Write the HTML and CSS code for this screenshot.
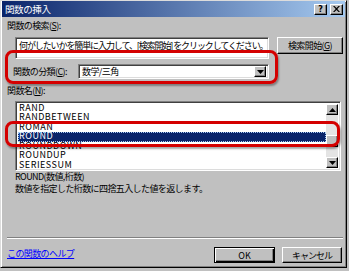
FILE: index.html
```html
<!DOCTYPE html>
<html><head><title>関数の挿入</title>
<link rel="stylesheet" href="styles.css">
</head>
<body>
<div class="window">
  <div class="titlebar">
    <span class="title">関数の挿入</span>
    <span class="caption-btns">
      <span class="cap-btn help">?</span>
      <span class="cap-btn close"><svg width="7" height="6" viewBox="0 0 7 6"><path d="M0 0h1.5l2 2 2-2H7L4.3 3 7 6H5.5l-2-2-2 2H0l2.7-3z" fill="#000"/></svg></span>
    </span>
  </div>
  <div class="content">
    <div class="label">関数の検索(<u>S</u>):</div>
    <div class="search-row">
      <div class="field search-field">何がしたいかを簡単に入力して、[検索開始] をクリックしてください。</div>
      <div class="btn search-btn">検索開始(<u>G</u>)</div>
    </div>
    <div class="category-row">
      <span class="label cat-label">関数の分類(<u>C</u>):</span>
      <div class="field combo">
        <span class="combo-text">数学/三角</span>
        <span class="btn drop"><svg width="7" height="4" viewBox="0 0 7 4"><path d="M0 0h7L3.5 4z" fill="#000"/></svg></span>
      </div>
    </div>
    <div class="label name-label">関数名(<u>N</u>):</div>
    <div class="field listbox">
      <div class="items">
        <div class="item">RAND</div>
        <div class="item">RANDBETWEEN</div>
        <div class="item">ROMAN</div>
        <div class="item selected">ROUND</div>
        <div class="item">ROUNDDOWN</div>
        <div class="item">ROUNDUP</div>
        <div class="item">SERIESSUM</div>
      </div>
      <div class="scrollbar">
        <span class="btn arrow"><svg width="7" height="4" viewBox="0 0 7 4"><path d="M0 4h7L3.5 0z" fill="#000"/></svg></span>
        <span class="track"><span class="btn thumb"></span></span>
        <span class="btn arrow"><svg width="7" height="4" viewBox="0 0 7 4"><path d="M0 0h7L3.5 4z" fill="#000"/></svg></span>
      </div>
    </div>
    <div class="desc">
      <div>ROUND(数値,桁数)</div>
      <div>数値を指定した桁数に四捨五入した値を返します。</div>
    </div>
    <div class="separator"></div>
    <div class="footer">
      <a class="help-link" href="#">この関数のヘルプ</a>
      <div class="footer-btns">
        <div class="btn ok-btn">OK</div>
        <div class="btn cancel-btn">キャンセル</div>
      </div>
    </div>
  </div>
  <div class="mark mark-category"></div>
  <div class="mark mark-round"></div>
</div>
</body>
</html>
```

FILE: styles.css
```css
body {
    margin: 0;
    background: #c0c0c0;
    font-family: "Noto Sans CJK JP", "DejaVu Sans", sans-serif;
    font-size: 9px;
    letter-spacing: -0.6px;
    color: #000;
}

.window {
    position: relative;
    box-sizing: border-box;
    width: 347px;
    height: 268px;
    display: flex;
    flex-direction: column;
    background: #c0c0c0;
    border: 1px solid;
    border-color: #dcdcdc #000 #000 #dcdcdc;
    box-shadow: inset 1px 1px #fff, inset -1px -1px #808080;
}

.titlebar {
    height: 16px;
    margin: 0 1px;
    display: flex;
    align-items: center;
    justify-content: space-between;
    padding: 0 2px 0 3px;
    background: linear-gradient(to right, #0a246a, #a6caf0);
    color: #fff;
}
.title {
    font-size: 9.5px;
    letter-spacing: -0.4px;
    line-height: 12px;
}
.caption-btns {
    display: flex;
    gap: 3px;
}
.cap-btn {
    box-sizing: border-box;
    width: 13px;
    height: 11px;
    display: flex;
    align-items: center;
    justify-content: center;
    background: #c0c0c0;
    color: #000;
    font-family: "DejaVu Sans", sans-serif;
    font-weight: bold;
    font-size: 8px;
    letter-spacing: 0;
    border: 1px solid;
    border-color: #fff #000 #000 #fff;
    box-shadow: inset -1px -1px #808080;
}

.content {
    flex: 1;
    display: flex;
    flex-direction: column;
    padding: 0 3px 4px 6px;
}

.label {
    line-height: 12px;
    margin-top: 3px;
}

/* sunken field */
.field {
    box-sizing: border-box;
    background: #fff;
    border: 1px solid;
    border-color: #808080 #fff #fff #808080;
    box-shadow: inset 1px 1px #404040, inset -1px -1px #dcdcdc;
}
/* raised button */
.btn {
    box-sizing: border-box;
    display: flex;
    align-items: center;
    justify-content: center;
    background: #c0c0c0;
    border: 1px solid;
    border-color: #fff #000 #000 #fff;
    box-shadow: inset -1px -1px #808080;
}

.search-row {
    display: flex;
    align-items: flex-start;
    margin: 5px 0 0 8px;
}
.search-field {
    width: 254px;
    height: 22px;
    padding: 2px 3px;
    line-height: 11px;
    letter-spacing: -1.1px;
    white-space: nowrap;
    overflow: hidden;
}
.search-btn {
    width: 66px;
    height: 17px;
    margin-left: 8px;
}

.category-row {
    display: flex;
    align-items: center;
    margin-top: 5px;
    height: 15px;
}
.cat-label {
    margin: 0 0 0 6px;
    width: 65px;
}
.combo {
    width: 191px;
    height: 15px;
    display: flex;
    align-items: center;
    justify-content: space-between;
    padding: 0 2px 0 3px;
}
.drop {
    width: 12px;
    height: 11px;
}

.name-label {
    margin-top: 6px;
}

.listbox {
    display: flex;
    width: 326px;
    height: 70px;
    margin: 4px 0 0 8px;
    padding: 2px;
    overflow: hidden;
}
.items {
    flex: 1;
    margin-top: -0.5px;
    letter-spacing: 0.5px;
}
.item {
    height: 9.6px;
    line-height: 8px;
    padding-left: 1px;
    white-space: nowrap;
}
.item.selected {
    background: #0a246a;
    color: #fff;
    outline: 1px dotted #a6caf0;
    outline-offset: -1px;
}
.scrollbar {
    width: 12px;
    display: flex;
    flex-direction: column;
}
.arrow {
    height: 11px;
    flex: none;
}
.track {
    flex: 1;
    background: #e4e4e4;
    display: flex;
    flex-direction: column;
    justify-content: flex-end;
    padding-bottom: 10px;
}
.thumb {
    height: 12px;
}

.desc {
    margin: 0 0 0 8px;
    line-height: 12px;
}

.separator {
    margin-top: auto;
    height: 0;
    border-top: 1px solid #808080;
    border-bottom: 1px solid #fff;
}

.footer {
    display: flex;
    justify-content: space-between;
    align-items: flex-start;
    margin-top: 8px;
    height: 16px;
}
.help-link {
    color: #0000ff;
    line-height: 12px;
    padding-top: 1px;
}
.footer-btns {
    display: flex;
    gap: 7px;
    margin-right: 1px;
}
.ok-btn {
    width: 61px;
    height: 16px;
    letter-spacing: 0;
    border-color: #000;
    box-shadow: inset 1px 1px #fff, inset -1px -1px #000, inset -2px -2px #808080;
}
.cancel-btn {
    width: 60px;
    height: 16px;
    letter-spacing: -1px;
}

/* red annotation frames drawn over the dialog */
.mark {
    position: absolute;
    box-sizing: border-box;
    border: 3px solid #d40000;
    border-radius: 8px;
    box-shadow: 1px 2px 2px rgba(0, 0, 0, 0.35);
}
.mark-category {
    left: 4px;
    top: 49px;
    width: 273px;
    height: 34px;
}
.mark-round {
    left: 4px;
    top: 120px;
    width: 335px;
    height: 26px;
}
```
